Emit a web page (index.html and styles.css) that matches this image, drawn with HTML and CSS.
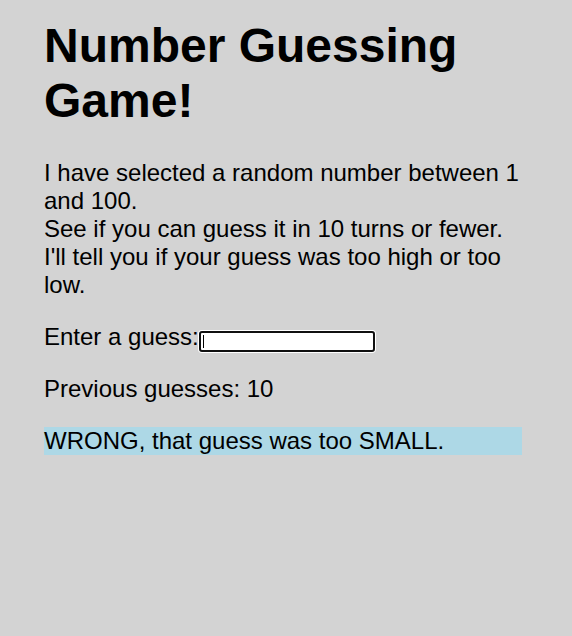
FILE: index.html
```html
<!DOCTYPE html>
<html>
<head>
<meta charset="utf-8">
<title>Number Guessing Game</title>
<link rel="stylesheet" href="styles.css">
</head>
<body>
<main class="game">
  <h1 class="title">Number Guessing Game!</h1>
  <p class="intro">I have selected a random number between 1 and 100.<br>See if you can guess it in 10 turns or fewer. I'll tell you if your guess was too high or too low.</p>
  <p class="entry"><label class="entry-label" for="guess">Enter a guess:</label><input class="guess-field" id="guess" type="text"></p>
  <p class="previous">Previous guesses: 10</p>
  <p class="result">WRONG, that guess was too SMALL.</p>
</main>
</body>
</html>
```
FILE: styles.css
```css
html {
  background: #d3d3d3;
}
body {
  margin: 0;
  font-family: "Liberation Sans", Arial, sans-serif;
  font-size: 24px;
  color: #000;
}
.game {
  width: 478px;
  padding: 18px 0 0 44px;
}
.title {
  font-size: 48px;
  font-weight: bold;
  margin: 0 0 31px;
}
.intro,
.entry,
.previous,
.result {
  margin: 24px 0;
  line-height: 28px;
}
.intro {
  margin-top: 0;
}
.entry {
  margin-bottom: 23px;
}
.previous {
  margin-top: 23px;
}
.guess-field {
  width: 176px;
  height: 21px;
  box-sizing: border-box;
  border: 2px solid #101010;
  border-radius: 3px;
  box-shadow: 0 0 0 1px #fff;
  padding: 1px 2px;
  font-size: 13.33px;
  background: #fff linear-gradient(#000, #000) no-repeat 2px 2px / 1px 13px;
  outline: none;
  vertical-align: -1px;
}
.result {
  background: #add8e6;
}
```
